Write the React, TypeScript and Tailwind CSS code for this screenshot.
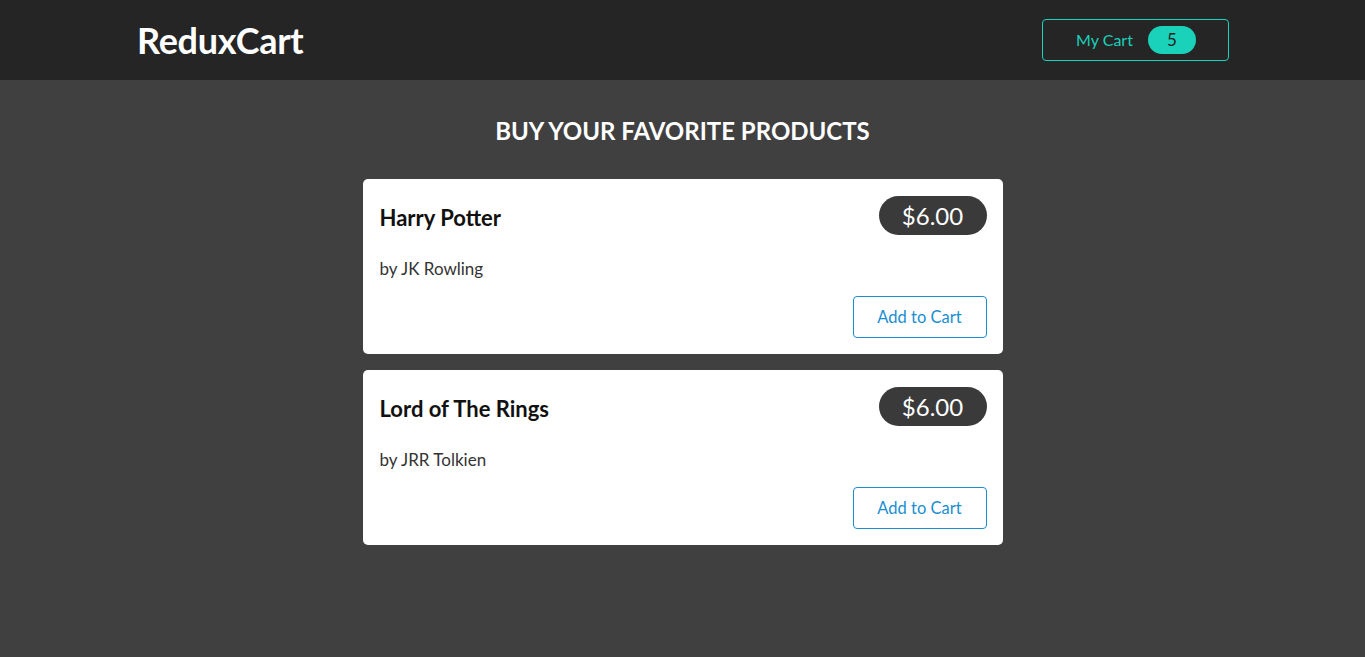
import React from 'react';

interface Product {
    title: string;
    author: string;
    price: number;
}

const products: Product[] = [
    { title: 'Harry Potter', author: 'JK Rowling', price: 6 },
    { title: 'Lord of The Rings', author: 'JRR Tolkien', price: 6 },
];

const ProductItem: React.FC<{ product: Product }> = ({ product }) => (
    <li className="bg-white rounded-[5px] pl-[17px] pr-[16px] pt-[17px] pb-[16px]">
        <header className="flex items-center justify-between h-[39px]">
            <h3 className="text-[22px] font-bold text-[#111] pt-[3px]">{product.title}</h3>
            <div className="bg-[#3a3a3a] text-white text-[24px] rounded-full h-[39px] w-[108px] flex items-center justify-center">
                ${product.price.toFixed(2)}
            </div>
        </header>
        <p className="mt-[22px] text-[17px] text-[#333] leading-[24px]">by {product.author}</p>
        <div className="flex justify-end mt-[15px]">
            <button className="h-[42px] w-[134px] border border-[#1a8ed1] text-[#1a8ed1] rounded-[4px] text-[16.5px] bg-white">
                Add to Cart
            </button>
        </div>
    </li>
);

export default function App() {
    return (
        <div className="min-h-[657px] bg-[#404040] font-['Lato','Liberation_Sans',sans-serif]">
            <header className="h-[80px] bg-[#252525]">
                <div className="ml-[137px] mr-[136px] h-full flex items-center justify-between">
                    <h1 className="text-[36px] font-bold text-white tracking-[-0.3px]">ReduxCart</h1>
                    <button className="h-[42px] w-[187px] border border-[#1ad1b9] rounded-[4px] flex items-center justify-center gap-[15px] pl-[1px]">
                        <span className="text-[#1ad1b9] text-[16px]">My Cart</span>
                        <span className="bg-[#1ad1b9] text-[#222] rounded-full h-[28px] w-[48px] flex items-center justify-center text-[17px]">5</span>
                    </button>
                </div>
            </header>
            <main className="w-[640px] mx-auto pt-[34px]">
                <h2 className="text-center text-white text-[24px] font-bold leading-[34px]">BUY YOUR FAVORITE PRODUCTS</h2>
                <ul className="mt-[31px] flex flex-col gap-[16px]">
                    {products.map((product) => (
                        <ProductItem key={product.title} product={product} />
                    ))}
                </ul>
            </main>
        </div>
    );
}
